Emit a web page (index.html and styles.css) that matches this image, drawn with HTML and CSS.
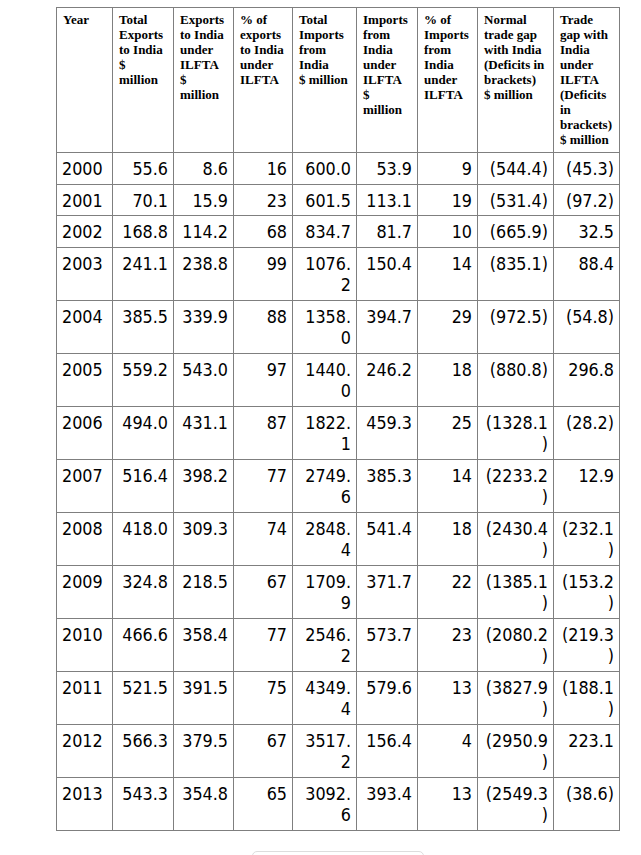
FILE: index.html
```html
<!DOCTYPE html>
<html lang="en">
<head>
<meta charset="utf-8">
<title>Trade with India under ILFTA</title>
<link rel="stylesheet" href="styles.css">
</head>
<body>
<div class="page">
<table class="trade">
<thead>
<tr>
<th class="c1">Year</th>
<th class="c2">Total<br>Exports<br>to India<br>$<br>million</th>
<th class="c3">Exports<br>to India<br>under<br>ILFTA<br>$<br>million</th>
<th class="c4">% of<br>exports<br>to India<br>under<br>ILFTA</th>
<th class="c5">Total<br>Imports<br>from<br>India<br>$ million</th>
<th class="c6">Imports<br>from<br>India<br>under<br>ILFTA<br>$<br>million</th>
<th class="c7">% of<br>Imports<br>from<br>India<br>under<br>ILFTA</th>
<th class="c8">Normal<br>trade gap<br>with India<br>(Deficits in<br>brackets)<br>$ million</th>
<th class="c9">Trade<br>gap with<br>India<br>under<br>ILFTA<br>(Deficits<br>in<br>brackets)<br>$ million</th>
</tr>
</thead>
<tbody>
<tr><td class="yr">2000</td><td class="num">55.6</td><td class="num">8.6</td><td class="num">16</td><td class="num">600.0</td><td class="num">53.9</td><td class="num">9</td><td class="num">(544.4)</td><td class="num">(45.3)</td></tr>
<tr><td class="yr">2001</td><td class="num">70.1</td><td class="num">15.9</td><td class="num">23</td><td class="num">601.5</td><td class="num">113.1</td><td class="num">19</td><td class="num">(531.4)</td><td class="num">(97.2)</td></tr>
<tr><td class="yr">2002</td><td class="num">168.8</td><td class="num">114.2</td><td class="num">68</td><td class="num">834.7</td><td class="num">81.7</td><td class="num">10</td><td class="num">(665.9)</td><td class="num">32.5</td></tr>
<tr><td class="yr">2003</td><td class="num">241.1</td><td class="num">238.8</td><td class="num">99</td><td class="num">1076.2</td><td class="num">150.4</td><td class="num">14</td><td class="num">(835.1)</td><td class="num">88.4</td></tr>
<tr><td class="yr">2004</td><td class="num">385.5</td><td class="num">339.9</td><td class="num">88</td><td class="num">1358.0</td><td class="num">394.7</td><td class="num">29</td><td class="num">(972.5)</td><td class="num">(54.8)</td></tr>
<tr><td class="yr">2005</td><td class="num">559.2</td><td class="num">543.0</td><td class="num">97</td><td class="num">1440.0</td><td class="num">246.2</td><td class="num">18</td><td class="num">(880.8)</td><td class="num">296.8</td></tr>
<tr><td class="yr">2006</td><td class="num">494.0</td><td class="num">431.1</td><td class="num">87</td><td class="num">1822.1</td><td class="num">459.3</td><td class="num">25</td><td class="num">(1328.1)</td><td class="num">(28.2)</td></tr>
<tr><td class="yr">2007</td><td class="num">516.4</td><td class="num">398.2</td><td class="num">77</td><td class="num">2749.6</td><td class="num">385.3</td><td class="num">14</td><td class="num">(2233.2)</td><td class="num">12.9</td></tr>
<tr><td class="yr">2008</td><td class="num">418.0</td><td class="num">309.3</td><td class="num">74</td><td class="num">2848.4</td><td class="num">541.4</td><td class="num">18</td><td class="num">(2430.4)</td><td class="num">(232.1)</td></tr>
<tr><td class="yr">2009</td><td class="num">324.8</td><td class="num">218.5</td><td class="num">67</td><td class="num">1709.9</td><td class="num">371.7</td><td class="num">22</td><td class="num">(1385.1)</td><td class="num">(153.2)</td></tr>
<tr><td class="yr">2010</td><td class="num">466.6</td><td class="num">358.4</td><td class="num">77</td><td class="num">2546.2</td><td class="num">573.7</td><td class="num">23</td><td class="num">(2080.2)</td><td class="num">(219.3)</td></tr>
<tr><td class="yr">2011</td><td class="num">521.5</td><td class="num">391.5</td><td class="num">75</td><td class="num">4349.4</td><td class="num">579.6</td><td class="num">13</td><td class="num">(3827.9)</td><td class="num">(188.1)</td></tr>
<tr><td class="yr">2012</td><td class="num">566.3</td><td class="num">379.5</td><td class="num">67</td><td class="num">3517.2</td><td class="num">156.4</td><td class="num">4</td><td class="num">(2950.9)</td><td class="num">223.1</td></tr>
<tr><td class="yr">2013</td><td class="num">543.3</td><td class="num">354.8</td><td class="num">65</td><td class="num">3092.6</td><td class="num">393.4</td><td class="num">13</td><td class="num">(2549.3)</td><td class="num">(38.6)</td></tr>
</tbody>
</table>
<div class="more-row"><div class="more"></div></div>
</div>
</body>
</html>
```

FILE: styles.css
```css
html, body {
  margin: 0;
  padding: 0;
  background: #ffffff;
  color: #000000;
}

.page {
  width: 564px;
  margin-left: 56px;
  padding-top: 7px;
}

.trade {
  width: 564px;
  table-layout: fixed;
  border-collapse: separate;
  border-spacing: 0;
  border-left: 1px solid #7f7f7f;
  border-top: 1px solid #7f7f7f;
}

.trade th,
.trade td {
  box-sizing: border-box;
  border-right: 1px solid #7f7f7f;
  border-bottom: 1px solid #7f7f7f;
  vertical-align: top;
}

.trade th {
  font-family: "Liberation Serif", "Times New Roman", serif;
  font-weight: bold;
  font-size: 13px;
  line-height: 15px;
  text-align: left;
  padding: 4px 5px 5px 6px;
  white-space: nowrap;
}

.c1 { width: 56px; }
.c2 { width: 61px; }
.c3 { width: 60px; }
.c4 { width: 59px; }
.c5 { width: 64px; }
.c6 { width: 61px; }
.c7 { width: 60px; }
.c8 { width: 76px; }
.c9 { width: 66px; }

.trade td {
  font-family: "DejaVu Sans Condensed", "DejaVu Sans", sans-serif;
  font-size: 17.8px;
  line-height: 21.5px;
  padding: 5px 5px 4px 5px;
  word-break: normal;
  overflow-wrap: anywhere;
}

.trade td.yr {
  text-align: left;
}

.trade td.num {
  text-align: right;
}

.more-row {
  display: flex;
  justify-content: center;
  padding-top: 20px;
}

.more {
  width: 170px;
  height: 36px;
  border: 1px solid #dddddd;
  border-radius: 5px;
  background: #ffffff;
}
```
